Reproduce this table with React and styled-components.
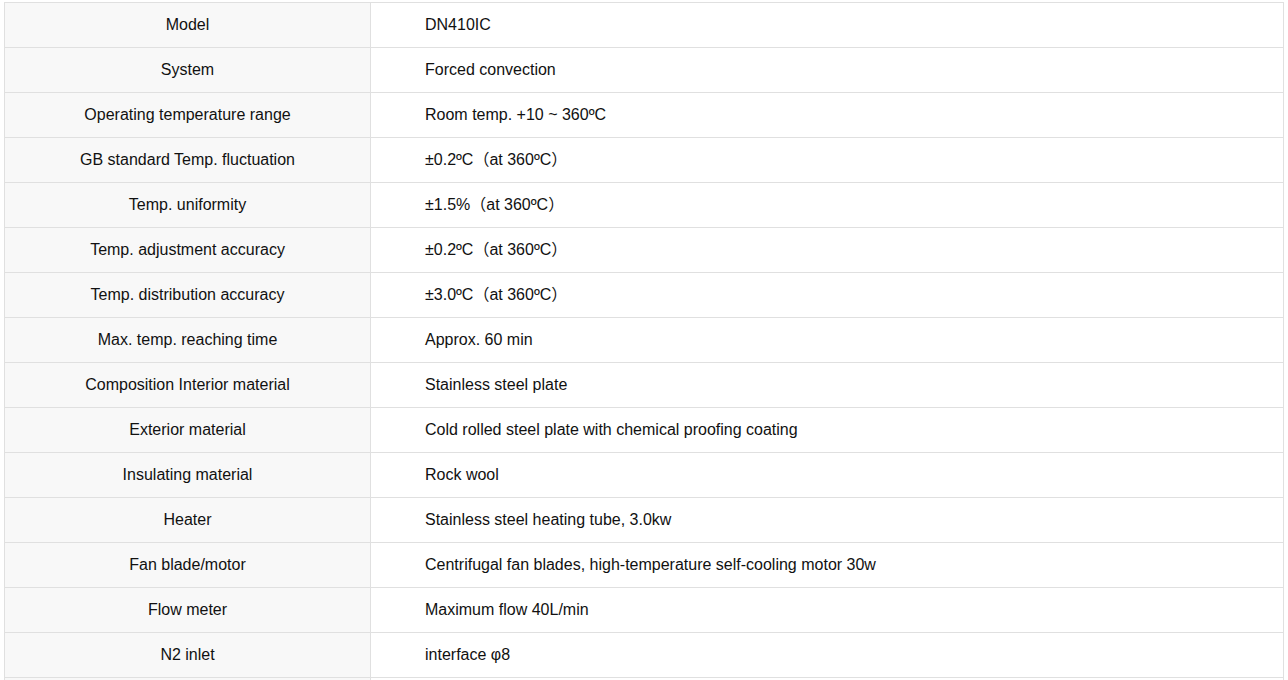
import React from "react";
import styled, { createGlobalStyle } from "styled-components";

const Global = createGlobalStyle`
  html, body { margin: 0; padding: 0; background: #fff; }
  body { font-family: "Liberation Sans", Arial, "Noto Sans CJK SC", sans-serif; }
`;

const Page = styled.div`
  padding: 2px 4px 0 4px;
`;

const Table = styled.table`
  width: 1280px;
  border-collapse: collapse;
  table-layout: fixed;
  font-size: 16px;
  line-height: 20px;
  color: #111;
`;

const Row = styled.tr`
  height: 45px;
`;

const Label = styled.td`
  width: 366px;
  box-sizing: border-box;
  border: 1px solid #e0e0e0;
  background: #f8f8f8;
  text-align: center;
  vertical-align: middle;
  padding: 0 10px 1px;
`;

const Value = styled.td`
  border: 1px solid #e0e0e0;
  background: #fff;
  text-align: left;
  vertical-align: middle;
  padding: 0 0 1px 54px;
`;

const rows = [
  ["Model", "DN410IC"],
  ["System", "Forced convection"],
  ["Operating temperature range", "Room temp. +10 ~ 360ºC"],
  ["GB standard Temp. fluctuation", "±0.2ºC（at 360ºC）"],
  ["Temp. uniformity", "±1.5%（at 360ºC）"],
  ["Temp. adjustment accuracy", "±0.2ºC（at 360ºC）"],
  ["Temp. distribution accuracy", "±3.0ºC（at 360ºC）"],
  ["Max. temp. reaching time", "Approx. 60 min"],
  ["Composition Interior material", "Stainless steel plate"],
  ["Exterior material", "Cold rolled steel plate with chemical proofing coating"],
  ["Insulating material", "Rock wool"],
  ["Heater", "Stainless steel heating tube, 3.0kw"],
  ["Fan blade/motor", "Centrifugal fan blades, high-temperature self-cooling motor 30w"],
  ["Flow meter", "Maximum flow 40L/min"],
  ["N2 inlet", "interface φ8"],
  ["", ""],
];

export default function App() {
  return (
    <Page>
      <Global />
      <Table>
        <tbody>
          {rows.map(([k, v], i) => (
            <Row key={i}>
              <Label>{k}</Label>
              <Value>{v}</Value>
            </Row>
          ))}
        </tbody>
      </Table>
    </Page>
  );
}
